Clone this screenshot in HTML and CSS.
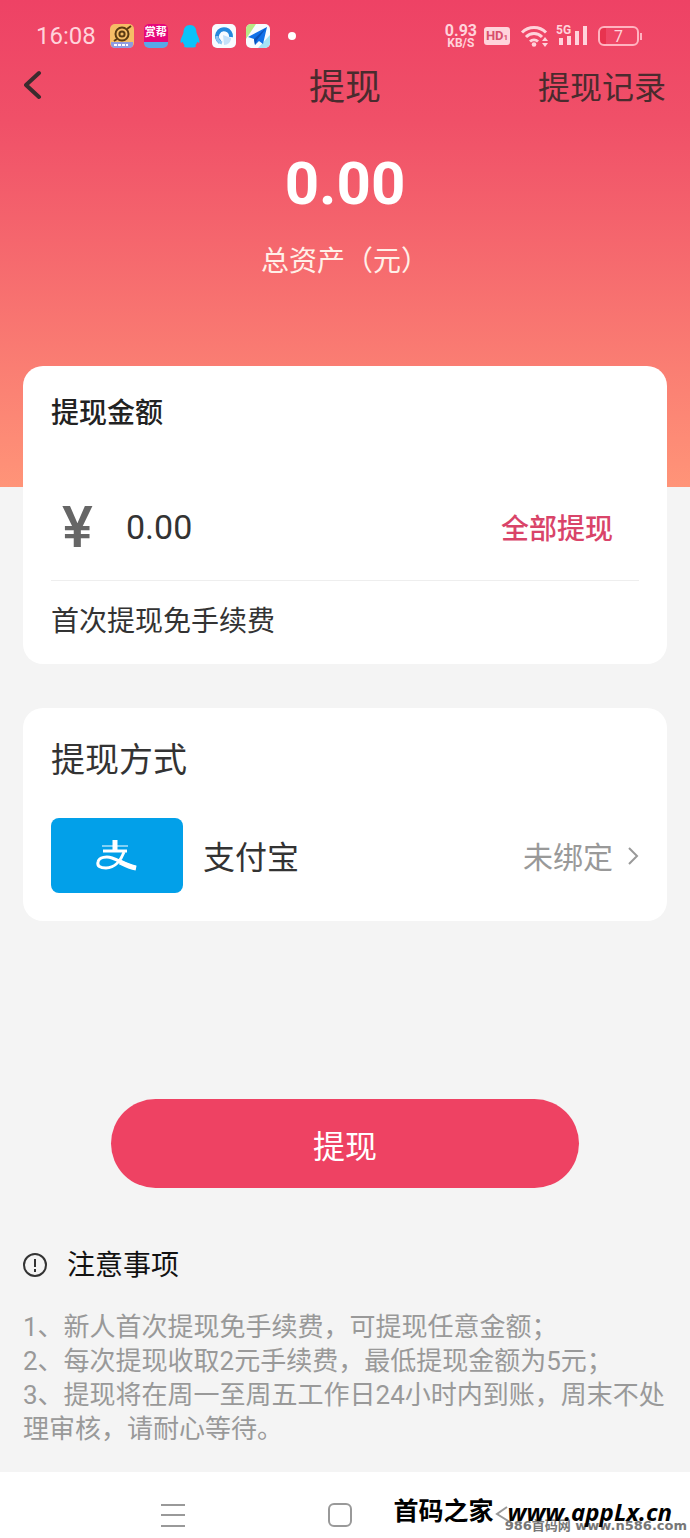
FILE: index.html
```html
<!DOCTYPE html>
<html lang="zh-CN">

<head>
    <meta charset="UTF-8">
    <meta name="viewport" content="width=device-width, initial-scale=1.0">
    <title>提现</title>
    <link rel="stylesheet" href="styles.css">
</head>

<body>
    <div class="hero">
        <div class="status-bar">
            <span class="time">16:08</span>
            <div class="app-icons">
                <svg width="24" height="24" viewBox="0 0 24 24">
                    <rect width="24" height="24" rx="5" fill="#f6bd66"/>
                    <path d="M1 18h22v2a4 4 0 0 1-4 4H5a4 4 0 0 1-4-4z" fill="#8f9be0"/>
                    <path d="M4 21h14" stroke="#fff" stroke-width="2" stroke-dasharray="3 1"/>
                    <circle cx="12" cy="10" r="6.5" fill="none" stroke="#5a3b12" stroke-width="2"/>
                    <circle cx="12" cy="10" r="2.6" fill="none" stroke="#5a3b12" stroke-width="2"/>
                    <path d="M17 5l4-3M7 15l-3 2" stroke="#5a3b12" stroke-width="2"/>
                </svg>
                <span class="app-shang">赏帮</span>
                <svg width="24" height="24" viewBox="0 0 24 24">
                    <path d="M12 1C7.500 1 5.500 4.500 5.500 8.500 5 11 2.500 14 2.500 17.500c0 1.800 1.200 1.500 2.200.2.400 1.500 1 2.600 2 3.300-1.500 1.800 0 2.500 2.300 2.500h6c2.300 0 3.800-.7 2.300-2.500 1-.7 1.600-1.800 2-3.300 1 1.300 2.200 1.600 2.200-.2 0-3.500-2.500-6.500-3-9C18.500 4.500 16.500 1 12 1z" fill="#0ac3fa"/>
                </svg>
                <svg width="24" height="24" viewBox="0 0 24 24">
                    <rect width="24" height="24" rx="5" fill="#f8fbff"/>
                    <path d="M11 11l8 3c0 4-3 7-7 7z" fill="#c4e1fa"/>
                    <path d="M8 18a7 7 0 1 1 11-5" fill="none" stroke="#2488dd" stroke-width="4"/>
                    <path d="M10 19a7 7 0 0 1-5-7" fill="none" stroke="#8cc4f2" stroke-width="3"/>
                </svg>
                <svg width="24" height="24" viewBox="0 0 24 24">
                    <rect width="24" height="24" rx="5" fill="#f8fbff"/>
                    <path d="M5 0h5L0 15V5a5 5 0 0 1 5-5z" fill="#b8e986"/>
                    <path d="M12 24l12-13v8a5 5 0 0 1-5 5z" fill="#a5e2f5"/>
                    <path d="M21 3L2 13l6 2 1 6 4-4 4 3z" fill="#1170e8"/>
                    <path d="M21 3L8 15l1 6 2-5z" fill="#0a50b8"/>
                </svg>
                <span class="more-dot"></span>
            </div>
            <div class="signals">
                <span class="speed">0.93<small>KB/S</small></span>
                <span class="hd">HD<small>1</small></span>
                <svg width="30" height="24" viewBox="0 0 30 24" fill="none" stroke="#ffd3db" stroke-width="3">
                    <path d="M2 8.500a17 17 0 0 1 24 0M6 13a11 11 0 0 1 16 0M10 17.500a6 6 0 0 1 8 0"/>
                    <circle cx="14" cy="20.500" r="2.300" fill="#ffd3db" stroke="none"/>
                    <path d="M22 17l3-4 3 4zM22 19l3 4 3-4z" fill="#ffd3db" stroke="none"/>
                </svg>
                <div class="cell">
                    <span class="cell-type">5G</span>
                    <svg width="32" height="24" viewBox="0 0 32 24" fill="#ffd3db">
                        <path d="M3 14h4v7H3zM11 12h4v9h-4zM19 7h4v14h-4zM27 2h4v19h-4z"/>
                    </svg>
                </div>
                <div class="battery">7</div>
            </div>
        </div>

        <div class="nav-bar">
            <button class="back" aria-label="返回">
                <svg width="20" height="36" viewBox="0 0 20 36" fill="none" stroke="#3b2b2e" stroke-width="4" stroke-linecap="round" stroke-linejoin="round">
                    <path d="M14 2L1 14l13 12" transform="translate(1 1)"/>
                </svg>
            </button>
            <h1>提现</h1>
            <a href="#" class="records">提现记录</a>
        </div>

        <div class="total">0.00</div>
        <div class="total-label">总资产（元）</div>
    </div>

    <main>
        <section class="card amount-card">
            <label for="amount">提现金额</label>
            <div class="amount-row">
                <span class="yen">¥</span>
                <input type="text" id="amount" value="0.00">
                <button class="all">全部提现</button>
            </div>
            <p>首次提现免手续费</p>
        </section>

        <section class="card method-card">
            <h2>提现方式</h2>
            <a href="#" class="method">
                <span class="alipay">
                    <svg width="44" height="34" viewBox="0 0 44 34" fill="none" stroke="#fff" stroke-width="4">
                        <path d="M7 7h26" stroke-width="2" opacity=".5"/>
                        <path d="M20 1v12" stroke-width="5"/>
                        <path d="M8 12h24" stroke-width="3"/>
                        <path d="M29 13c-3 8-9 16-18 16-6 0-9-2-8-6 1-5 9-6 14-4 8 3 14 7 24 10" stroke-width="3"/>
                        <path d="M25 23c6 3 10 5 16 6" stroke-width="5"/>
                    </svg>
                </span>
                <span class="method-name">支付宝</span>
                <span class="state">未绑定</span>
                <svg width="12" height="20" viewBox="0 0 12 20" fill="none" stroke="#999" stroke-width="2">
                    <path d="M2 2l8 8-8 8"/>
                </svg>
            </a>
        </section>

        <button class="submit">提现</button>

        <section class="notice">
            <h3>
                <svg width="26" height="26" viewBox="0 0 26 26" fill="none" stroke="#333" stroke-width="2">
                    <circle cx="12" cy="12" r="11"/>
                    <path d="M12 6v8M12 16v3"/>
                </svg>
                注意事项
            </h3>
            <p>1、新人首次提现免手续费，可提现任意金额；</p>
            <p>2、每次提现收取2元手续费，最低提现金额为5元；</p>
            <p>3、提现将在周一至周五工作日24小时内到账，周末不处理审核，请耐心等待。</p>
        </section>
    </main>

    <footer>
        <svg width="26" height="26" viewBox="0 0 26 26" fill="none" stroke="#999" stroke-width="2">
            <path d="M1 3h24M1 13h24M1 24h24"/>
        </svg>
        <svg width="26" height="26" viewBox="0 0 26 26" fill="none" stroke="#999" stroke-width="2">
            <rect x="2" y="2" width="22" height="22" rx="5"/>
        </svg>
        <svg width="26" height="26" viewBox="0 0 26 26" fill="none" stroke="#999" stroke-width="2">
            <path d="M13 5L3 12l16 10"/>
        </svg>
        <div class="mark-small">986首码网 www.n586.com</div>
        <div class="mark"><span>首码之家</span><b>www.appLx.cn</b></div>
    </footer>
</body>

</html>
```

FILE: styles.css
```css
* {
    box-sizing: border-box;
}

body {
    margin: 0;
    min-height: 100vh;
    display: flex;
    flex-direction: column;
    background-color: #f4f4f4;
    color: #333;
    font-family: Roboto, "Noto Sans CJK SC", sans-serif;
    font-size: 28px;
    line-height: 40px;
}

h1, h2, h3, p {
    margin: 0;
    font-weight: 400;
}

button {
    padding: 0;
    border: none;
    background: none;
    font-family: inherit;
    cursor: pointer;
}

a {
    color: inherit;
    text-decoration: none;
}

svg {
    display: block;
    flex-shrink: 0;
}

.hero {
    padding: 20px 24px 205px;
    background: linear-gradient(#ee4265, #f05068 25%, #ff9478);
    color: #fff;
    text-align: center;
}

/* status bar */
.status-bar {
    display: flex;
    align-items: center;
    height: 32px;
    padding: 0 27px 0 12px;
    color: #ffd3db;
}

.time {
    font-size: 24px;
}

.app-icons {
    display: flex;
    align-items: center;
    gap: 10px;
    margin-left: 14px;
}

.app-shang {
    width: 24px;
    height: 24px;
    border-radius: 5px;
    background: linear-gradient(#e6087a 75%, #58a8e8 75%);
    color: #fff;
    font-size: 11px;
    font-weight: 700;
    line-height: 18px;
}

.more-dot {
    width: 8px;
    height: 8px;
    margin-left: 8px;
    border-radius: 50%;
    background-color: #fff;
}

.signals {
    display: flex;
    align-items: center;
    margin-left: auto;
}

.speed {
    font-size: 16px;
    font-weight: 700;
    line-height: 13px;
}

.speed small {
    display: block;
    font-size: 12px;
    line-height: 12px;
}

.hd {
    width: 26px;
    height: 18px;
    margin: 0 10px 0 7px;
    border-radius: 3px;
    background-color: #ffd3db;
    color: #d9506c;
    font-size: 13px;
    font-weight: 700;
    line-height: 18px;
}

.hd small {
    font-size: 8px;
}

.cell {
    position: relative;
    margin: 0 10px 0 6px;
}

.cell-type {
    position: absolute;
    top: 0;
    left: 0;
    font-size: 12px;
    font-weight: 700;
    line-height: 12px;
}

.battery {
    position: relative;
    width: 41px;
    height: 20px;
    border: 2px solid #ffb3c0;
    border-radius: 6px;
    background: linear-gradient(90deg, #e8334f 6px, transparent 6px);
    font-size: 16px;
    line-height: 17px;
}

.battery::after {
    content: "";
    position: absolute;
    top: 5px;
    right: -5px;
    width: 2px;
    height: 7px;
    background-color: #ffb3c0;
}

/* title row */
.nav-bar {
    display: grid;
    grid-template-columns: 1fr auto 1fr;
    align-items: center;
    height: 72px;
    color: #4a2b2e;
}

.back {
    justify-self: start;
}

.nav-bar h1 {
    font-size: 36px;
}

.records {
    justify-self: end;
    font-size: 32px;
}

.total {
    margin-top: 24px;
    font-size: 60px;
    font-weight: 700;
    line-height: 72px;
}

.total-label {
    margin-top: 22px;
    color: #fff0e8;
}

main {
    flex: 1;
    margin-top: -121px;
    padding: 0 23px 24px;
}

.card {
    padding: 28px 28px 22px;
    border-radius: 20px;
    background-color: #fff;
}

.amount-card label {
    display: block;
    color: #222;
    font-weight: 500;
}

.amount-row {
    display: flex;
    align-items: center;
    height: 108px;
    margin: 39px 0 21px;
    padding: 0 26px 0 11px;
    border-bottom: 1px solid #eee;
}

.yen {
    width: 64px;
    color: #666;
    font-size: 58px;
    font-weight: 500;
}

#amount {
    flex: 1;
    min-width: 0;
    padding: 0;
    border: none;
    outline: none;
    background: none;
    color: #333;
    font-family: inherit;
    font-size: 34px;
}

.all {
    color: #d94469;
    font-size: 28px;
    font-weight: 500;
}

.method-card {
    margin-top: 44px;
    padding-bottom: 28px;
}

.method-card h2 {
    font-size: 34px;
    line-height: 48px;
}

.method {
    display: flex;
    align-items: center;
    margin-top: 34px;
}

.alipay {
    display: flex;
    align-items: center;
    justify-content: center;
    width: 132px;
    height: 75px;
    border-radius: 8px;
    background-color: #02a0e9;
}

.method-name {
    margin-left: 20px;
    padding-top: 4px;
    font-size: 32px;
}

.state {
    margin: 0 14px 0 auto;
    padding-top: 4px;
    color: #999;
    font-size: 30px;
}

.submit {
    display: block;
    width: calc(100% - 176px);
    height: 89px;
    margin: 178px auto 58px;
    border-radius: 45px;
    background-color: #ee4263;
    color: #fff;
    font-size: 32px;
}

.notice h3 {
    display: flex;
    align-items: center;
    gap: 18px;
    margin-bottom: 24px;
    color: #111;
    font-size: 28px;
}

.notice p {
    color: #999;
    font-size: 26px;
    line-height: 34px;
}

/* system navigation */
footer {
    position: relative;
    display: grid;
    grid-template-columns: repeat(3, 1fr);
    justify-items: center;
    padding: 30px 100px 10px 89px;
    background-color: #fff;
    overflow: hidden;
}

.mark,
.mark-small {
    position: absolute;
    right: 18px;
    bottom: 6px;
    display: flex;
    align-items: center;
    gap: 14px;
    color: #000;
    white-space: nowrap;
}

.mark span {
    font-size: 25px;
    font-weight: 700;
}

.mark b {
    font-family: "Open Sans", sans-serif;
    font-size: 24px;
    font-style: italic;
}

.mark-small {
    right: 3px;
    bottom: 3px;
    color: #777;
    font-family: "DejaVu Sans", "Noto Sans CJK SC", sans-serif;
    font-size: 13px;
    font-weight: 700;
    line-height: 18px;
}
```
